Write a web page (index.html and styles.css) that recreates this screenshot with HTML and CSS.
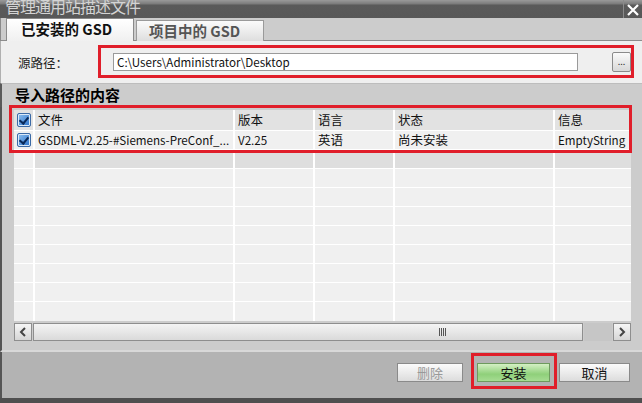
FILE: index.html
```html
<!DOCTYPE html>
<html lang="zh-CN">
<head>
<meta charset="utf-8">
<title>管理通用站描述文件</title>
<link rel="stylesheet" href="styles.css">
</head>
<body>
<div class="window">
  <div class="titlebar">
    <span class="title">管理通用站描述文件</span>
    <span class="close">
      <svg width="14" height="12" viewBox="0 0 14 12"><path d="M2 1 L12 11 M12 1 L2 11" stroke="#fff" stroke-width="2.2" fill="none"/></svg>
    </span>
  </div>
  <div class="tabs">
    <div class="tab active">已安装的 GSD</div>
    <div class="tab">项目中的 GSD</div>
  </div>
  <div class="source">
    <span class="label">源路径：</span>
    <div class="input">C:\Users\Administrator\Desktop</div>
    <div class="browse">...</div>
  </div>
  <div class="section-head">导入路径的内容</div>
  <div class="table-area">
    <div class="table">
      <div class="row head">
        <div class="cell rh"><span class="chk"></span></div>
        <div class="cell">文件</div>
        <div class="cell">版本</div>
        <div class="cell">语言</div>
        <div class="cell">状态</div>
        <div class="cell">信息</div>
      </div>
      <div class="row data">
        <div class="cell rh"><span class="chk"></span></div>
        <div class="cell lat">GSDML-V2.25-#Siemens-PreConf_...</div>
        <div class="cell lat">V2.25</div>
        <div class="cell">英语</div>
        <div class="cell">尚未安装</div>
        <div class="cell lat">EmptyString</div>
      </div>
      <div class="row empty dark"><div class="cell rh"></div><div class="cell"></div><div class="cell"></div><div class="cell"></div><div class="cell"></div><div class="cell"></div></div>
      <div class="row empty"><div class="cell rh"></div><div class="cell"></div><div class="cell"></div><div class="cell"></div><div class="cell"></div><div class="cell"></div></div>
      <div class="row empty"><div class="cell rh"></div><div class="cell"></div><div class="cell"></div><div class="cell"></div><div class="cell"></div><div class="cell"></div></div>
      <div class="row empty"><div class="cell rh"></div><div class="cell"></div><div class="cell"></div><div class="cell"></div><div class="cell"></div><div class="cell"></div></div>
      <div class="row empty"><div class="cell rh"></div><div class="cell"></div><div class="cell"></div><div class="cell"></div><div class="cell"></div><div class="cell"></div></div>
      <div class="row empty"><div class="cell rh"></div><div class="cell"></div><div class="cell"></div><div class="cell"></div><div class="cell"></div><div class="cell"></div></div>
      <div class="row empty"><div class="cell rh"></div><div class="cell"></div><div class="cell"></div><div class="cell"></div><div class="cell"></div><div class="cell"></div></div>
      <div class="row empty"><div class="cell rh"></div><div class="cell"></div><div class="cell"></div><div class="cell"></div><div class="cell"></div><div class="cell"></div></div>
      <div class="row empty last"><div class="cell rh"></div><div class="cell"></div><div class="cell"></div><div class="cell"></div><div class="cell"></div><div class="cell"></div></div>
    </div>
    <div class="hscroll">
      <div class="sbtn">
        <svg width="8" height="10" viewBox="0 0 8 10"><path d="M6 1 L2 5 L6 9" stroke="#444" stroke-width="2" fill="none"/></svg>
      </div>
      <div class="thumb"><span class="grip"></span></div>
      <div class="track"></div>
      <div class="sbtn">
        <svg width="8" height="10" viewBox="0 0 8 10"><path d="M2 1 L6 5 L2 9" stroke="#444" stroke-width="2" fill="none"/></svg>
      </div>
    </div>
  </div>
  <div class="spacer"></div>
  <div class="footer">
    <div class="btn disabled">删除</div>
    <div class="btn primary">安装</div>
    <div class="btn">取消</div>
  </div>
  <div class="bottom-strip"></div>
</div>
<div class="mark mark-source"></div>
<div class="mark mark-table"></div>
<div class="mark mark-install"></div>
</body>
</html>
```
FILE: styles.css
```css
* { box-sizing: border-box; }
html, body { margin: 0; padding: 0; }
body {
  width: 642px;
  height: 403px;
  overflow: hidden;
  position: relative;
  background: #cccccc;
  font-family: "Noto Sans CJK SC", "Noto Sans", sans-serif;
  color: #000;
}
.window { display: flex; flex-direction: column; height: 403px; }

.titlebar {
  height: 18px;
  display: flex;
  justify-content: space-between;
  background: linear-gradient(#9a9a9a 0, #7a7a7a 4px, #5a5a5a 5px, #585858 18px);
  overflow: hidden;
}
.title {
  font-size: 16px;
  line-height: 16px;
  color: #d4d4d4;
  margin-left: 5px;
  margin-top: -2px;
  letter-spacing: -1px;
}
.close {
  width: 19px;
  border-left: 1px solid #8a8a8a;
  display: flex;
  align-items: center;
  justify-content: center;
  padding-top: 1px;
}

.tabs {
  height: 23px;
  display: flex;
  align-items: flex-end;
  padding-left: 5px;
  background: #cccccc;
  border-bottom: 1px solid #8c8c8c;
  border-left: 1px solid #8a8a8a;
}
.tab {
  height: 21px;
  width: 128px;
  margin-right: 2px;
  margin-bottom: -1px;
  border: 1px solid #9a9a9a;
  border-bottom: none;
  background: linear-gradient(#fbfbfb, #dedede);
  font-size: 14.5px;
  font-weight: bold;
  color: #555;
  line-height: 20px;
  padding-left: 12px;
}
.tab.active {
  height: 23px;
  color: #111;
  padding-left: 14px;
  background: linear-gradient(#ffffff, #f0f0f0);
  border-color: #8a8a8a;
}

.source {
  height: 42px;
  background: #efefef;
  display: flex;
  align-items: center;
  padding-left: 17px;
  border-left: 1px solid #b0b0b0;
}
.label { font-size: 12.5px; width: 95px; color: #222; }
.input {
  width: 465px;
  height: 18px;
  background: #fff;
  border: 1px solid #9a9a9a;
  font-size: 11.6px;
  line-height: 16px;
  padding-left: 3px;
  color: #111;
}
.browse {
  margin-left: 34px;
  width: 19px;
  height: 20px;
  border: 1px solid #8a8a8a;
  border-radius: 2px;
  background: linear-gradient(#fafafa, #d8d8d8);
  font-size: 9px;
  line-height: 18px;
  text-align: center;
  color: #333;
}

.section-head {
  height: 24px;
  background: #cccccc;
  border-top: 1px solid #bdbdbd;
  border-left: 2px solid #5a5a5a;
  font-size: 15px;
  font-weight: bold;
  line-height: 22px;
  padding-left: 13px;
}

.table-area {
  height: 234px;
  border-left: 2px solid #555;
  padding: 3px 11px 0 12px;
  display: flex;
  flex-direction: column;
}
.table {
  background: #fff;
  display: flex;
  flex-direction: column;
  gap: 1px;
}
.row {
  display: grid;
  grid-template-columns: 19px 198px 78px 78px 158px 76px;
  column-gap: 2px;
  height: 18px;
}
.row.head { height: 20px; }
.row.last { height: 19px; }
.cell {
  background: #f0f0f0;
  font-size: 12.5px;
  line-height: 18px;
  padding-left: 3px;
  white-space: nowrap;
  overflow: hidden;
  color: #111;
}
.cell.lat { font-size: 11.6px; }
.row.head .cell { background: #e2e2e2; line-height: 20px; }
.row.dark .cell { background: #dedede; }
.row.dark .cell.rh, .row.empty .cell.rh { background: #f0f0f0; }
.row.head .cell.rh { background: #e2e2e2; }
.cell.rh { padding: 0; display: flex; align-items: center; justify-content: center; }
.chk {
  width: 14px;
  height: 14px;
  border: 1px solid #3b6aa6;
  border-radius: 2px;
  background: linear-gradient(135deg, #8ec0f0, #2a70c8);
  position: relative;
  box-shadow: inset 0 0 0 1px #dbe9f7;
}
.chk::after {
  content: "";
  position: absolute;
  left: 3px;
  top: 1px;
  width: 4px;
  height: 7px;
  border: solid #0a2a5a;
  border-width: 0 2px 2px 0;
  transform: rotate(40deg);
}

.hscroll {
  margin-top: 2px;
  height: 18px;
  display: flex;
  gap: 1px;
}
.sbtn {
  width: 18px;
  height: 18px;
  border: 1px solid #8e8e8e;
  background: linear-gradient(#f6f6f6, #d6d6d6);
  display: flex;
  align-items: center;
  justify-content: center;
}
.thumb {
  width: 550px;
  border: 1px solid #8e8e8e;
  background: linear-gradient(#f4f4f4, #dadada);
  display: flex;
  align-items: center;
  justify-content: center;
}
.grip {
  width: 7px;
  height: 8px;
  background: repeating-linear-gradient(90deg, #555 0 1px, transparent 1px 2px);
  margin-left: 268px;
}
.track { flex: 1; background: #c6c6c6; }

.spacer {
  border-left: 2px solid #555;
  border-bottom: 2px solid #d8d8d8;
  height: 11px;
}
.footer {
  height: 46px;
  background: #b3b3b3;
  display: flex;
  justify-content: flex-end;
  align-items: flex-start;
  padding-top: 11px;
  padding-right: 12px;
  border-left: 2px solid #555;
}
.btn {
  width: 71px;
  height: 19px;
  border: 1px solid #8a8a8a;
  background: linear-gradient(#fbfbfb, #dcdcdc);
  font-size: 13px;
  line-height: 17px;
  text-align: center;
  color: #111;
  margin-left: 9px;
}
.btn.disabled { width: 66px; color: #999; }
.btn.primary {
  width: 73px;
  margin-left: 14px;
  background: linear-gradient(#d4f0c4, #8fd07a 60%, #a6dc92);
  border-color: #6e9a5e;
}
.bottom-strip { height: 5px; background: #4f4f4f; }

.mark {
  position: absolute;
  border: 3px solid #e01e2a;
  pointer-events: none;
}
.mark-source { left: 98px; top: 45px; width: 536px; height: 33px; }
.mark-table { left: 9px; top: 105px; width: 623px; height: 48px; }
.mark-install { left: 471px; top: 353px; width: 86px; height: 36px; }
```
